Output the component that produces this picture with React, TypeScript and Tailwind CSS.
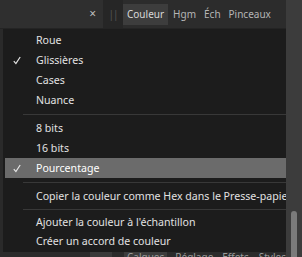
const font = { fontFamily: '"Noto Sans", "Open Sans", sans-serif' };

type Item = { label?: string; checked?: boolean; active?: boolean; sep?: boolean; short?: boolean };

const ITEMS: Item[] = [
  { label: "Roue" },
  { label: "Glissières", checked: true },
  { label: "Cases" },
  { label: "Nuance" },
  { sep: true },
  { label: "8 bits" },
  { label: "16 bits" },
  { label: "Pourcentage", checked: true, active: true },
  { sep: true },
  { label: "Copier la couleur comme Hex dans le Presse-papiers" },
  { sep: true, short: true },
  { label: "Ajouter la couleur à l'échantillon", short: true },
  { label: "Créer un accord de couleur", short: true },
];

function Check() {
  return (
    <svg width="8" height="9" viewBox="0 0 8 9" className="shrink-0">
      <path d="M0.8 5.2 L2.9 7.6 L7.2 1" fill="none" stroke="#e6e6e6" strokeWidth="1.2" />
    </svg>
  );
}

export default function App() {
  return (
    <div
      className="flex w-[302px] h-[257px] overflow-hidden bg-[#2b2b2b] text-[10.6px] leading-none"
      style={font}
    >
      <div className="flex flex-col w-[286px] shrink-0">
        {/* Tab bar */}
        <div className="flex h-[29px] shrink-0 items-center bg-[#2c2c2c] border-b border-[#242424] text-[10px]">
          <div className="flex h-full w-[103px] items-center justify-end bg-[#2f2f2f] pr-[7px]">
            <span className="text-[12px] text-[#bdbdbd]">×</span>
          </div>
          <div className="flex h-full w-[20px] items-center justify-center bg-[#262626]">
            <span className="text-[10px] tracking-[-1px] text-[#555]">||</span>
          </div>
          <div className="flex h-[21px] items-center bg-[#3d3d3d] px-[4px] text-[#d8d8d8]">
            Couleur
          </div>
          <div className="flex items-center gap-[8px] pl-[5px] text-[#b5b5b5]">
            <span>Hgm</span>
            <span>Éch</span>
            <span>Pinceaux</span>
          </div>
        </div>

        {/* Menu */}
        <div className="flex flex-1 min-h-0">
          <div className="w-[3px] shrink-0 bg-[#2a2a2a]" />
          <div className="flex-1 min-w-0 flex flex-col bg-[#1c1c1c] pt-[1px] overflow-hidden">
            {ITEMS.map((it, i) =>
              it.sep ? (
                <div
                  key={i}
                  className={"shrink-0 ml-[20px] h-px bg-[#383838] " + (it.short ? "my-[3px]" : "my-[3.5px]")}
                />
              ) : (
                <div
                  key={i}
                  className={
                    "flex shrink-0 items-center whitespace-nowrap overflow-hidden " +
                    (it.short ? "h-[19px] " : "h-[20px] ") +
                    (it.active ? "ml-[2px] bg-[#6b6b6b] text-white" : "text-[#e2e2e2]")
                  }
                >
                  <div className={"flex shrink-0 " + (it.active ? "w-[31px] pl-[8px]" : "w-[33px] pl-[10px]")}>
                    {it.checked && <Check />}
                  </div>
                  <span>{it.label}</span>
                </div>
              )
            )}
          </div>
        </div>

        {/* Bottom tabs, cut off */}
        <div className="flex h-[5px] shrink-0 items-start overflow-hidden bg-[#2b2b2b] text-[10px] text-[#9a9a9a]">
          <div className="w-[90px] shrink-0" />
          <div className="h-full w-[22px] shrink-0 bg-[#3a3a3a]" />
          <div className="w-[12px] shrink-0" />
          <span className="h-full bg-[#3d3d3d] px-[3px]">Calques</span>
          <span className="ml-[8px]">Réglage</span>
          <span className="ml-[9px]">Effets</span>
          <span className="ml-[10px]">Styles</span>
        </div>
      </div>

      {/* Side scroll strip */}
      <div className="flex flex-1 flex-col justify-end items-center bg-[#3c3c3c]">
        <div className="mb-[-4px] h-[50px] w-[6px] rounded-full bg-[#7b7b7b]" />
      </div>
    </div>
  );
}
